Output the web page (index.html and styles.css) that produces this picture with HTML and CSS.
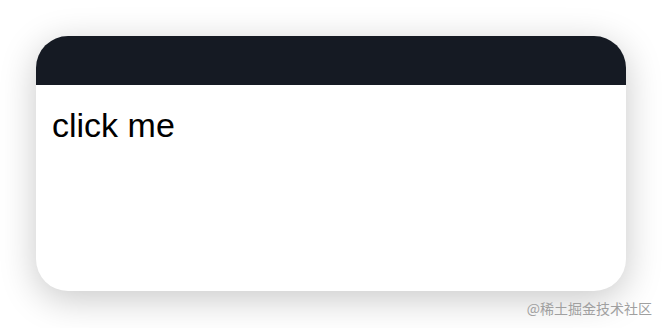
FILE: index.html
```html
<!DOCTYPE html>
<html>
<head>
<meta charset="utf-8">
<link rel="stylesheet" href="styles.css">
</head>
<body>
<div class="card">
  <div class="card-header"></div>
  <div class="card-body">click me</div>
</div>
<div class="watermark">@稀土掘金技术社区</div>
</body>
</html>
```
FILE: styles.css
```css
html, body {
  margin: 0;
  padding: 0;
  background: #ffffff;
}
body {
  width: 662px;
  height: 328px;
  padding: 36px;
  box-sizing: border-box;
  position: relative;
  font-family: "Liberation Sans", Arial, sans-serif;
}
.card {
  width: 590px;
  height: 255px;
  border-radius: 32px;
  overflow: hidden;
  background: #ffffff;
  box-shadow: 0 8px 36px rgba(0, 0, 0, 0.22);
  display: flex;
  flex-direction: column;
}
.card-header {
  height: 49px;
  background: #151a23;
  flex: none;
}
.card-body {
  padding: 21px 16px 0;
  font-size: 34px;
  line-height: 38px;
  color: #000000;
}
.watermark {
  position: absolute;
  right: 10px;
  bottom: 12px;
  font-family: "Noto Sans CJK SC", sans-serif;
  font-size: 14px;
  line-height: 16px;
  color: #a0a0a0;
}
```
